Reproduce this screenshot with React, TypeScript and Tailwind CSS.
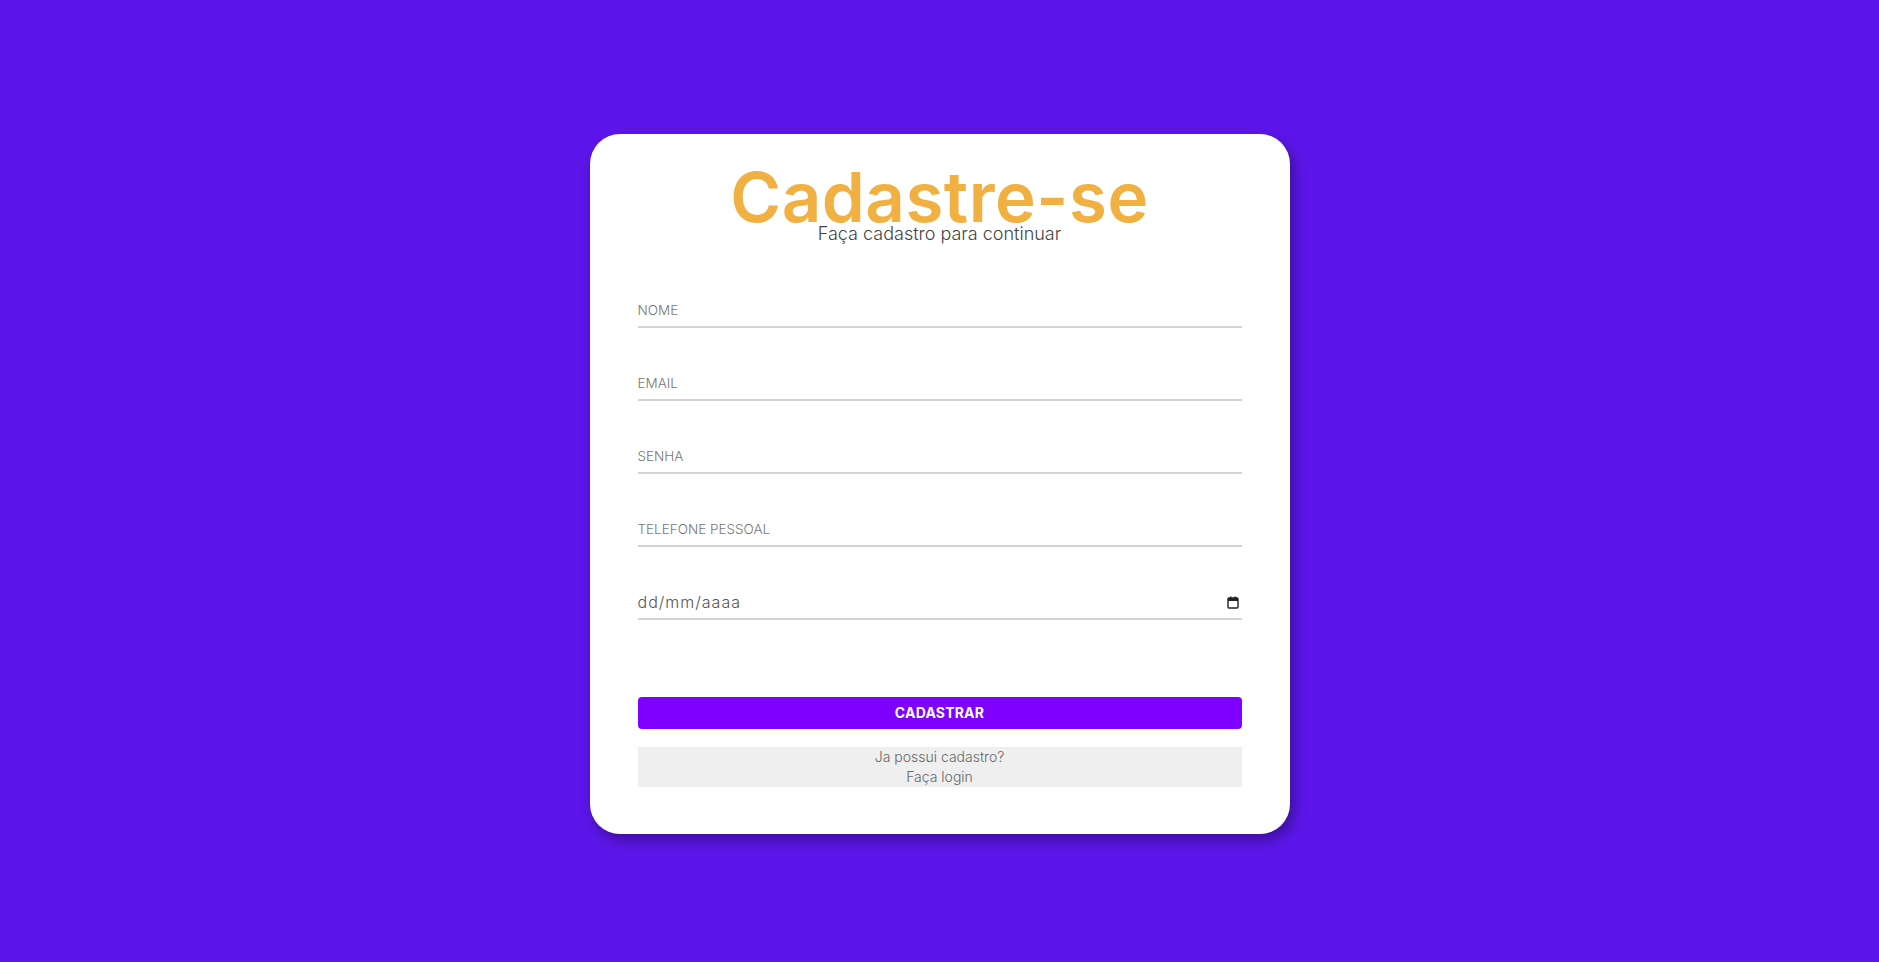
import { useState } from 'react'

const fields = ['NOME', 'EMAIL', 'SENHA', 'TELEFONE PESSOAL']

// calendar glyph like the native date picker one
function CalendarIcon() {
  return (
    <svg width="12" height="13" viewBox="0 0 12 13" fill="none">
      <rect x="1" y="2" width="10" height="10" rx="1" stroke="#222" strokeWidth="1.4" />
      <rect x="1" y="2" width="10" height="3" fill="#222" />
      <rect x="3" y="0.5" width="1.4" height="2.5" fill="#222" />
      <rect x="7.6" y="0.5" width="1.4" height="2.5" fill="#222" />
    </svg>
  )
}

export default function App() {
  const [values, setValues] = useState<Record<string, string>>({})

  return (
    <div
      className="min-h-[962px] w-full bg-[#5c16ea] flex items-center justify-center pt-[5px]"
      style={{ fontFamily: 'Inter, "Noto Sans", sans-serif' }}
    >
      <div className="w-[700px] h-[700px] bg-white rounded-[30px] shadow-[4px_6px_14px_rgba(0,0,0,0.35)] px-12 pt-[34px] flex flex-col">
        <h1 className="text-center text-[69px] leading-[58px] font-semibold text-[#f0b142] tracking-[0.5px]">
          Cadastre-se
        </h1>
        <p className="text-center text-[18px] leading-4 font-light text-[#444]">
          Faça cadastro para continuar
        </p>

        <form className="flex flex-col gap-10 mt-[53px]" onSubmit={(e) => e.preventDefault()}>
          {fields.map((f) => (
            <input
              key={f}
              placeholder={f}
              value={values[f] ?? ''}
              onChange={(e) => setValues({ ...values, [f]: e.target.value })}
              className="h-[33px] w-full border-b-2 border-[#d3d3d3] text-[13.5px] font-light text-[#444] placeholder:text-[#777] outline-none"
            />
          ))}

          {/* date field, pt-BR mask */}
          <div className="h-[33px] w-full border-b-2 border-[#d3d3d3] flex items-center justify-between pr-[3px]">
            <span className="text-[16px] font-light text-[#555] tracking-[1px]">dd/mm/aaaa</span>
            <CalendarIcon />
          </div>

          <button
            type="submit"
            className="mt-[37px] h-8 w-full rounded bg-[#8000ff] text-white text-[14px] font-bold tracking-[0.2px]"
          >
            CADASTRAR
          </button>
        </form>

        <div className="mt-[18px] bg-[#efefef] h-10 flex flex-col items-center justify-center text-[14px] leading-5 font-light text-[#666]">
          <span>Ja possui cadastro?</span>
          <a href="#" className="text-[#666]">Faça login</a>
        </div>
      </div>
    </div>
  )
}
